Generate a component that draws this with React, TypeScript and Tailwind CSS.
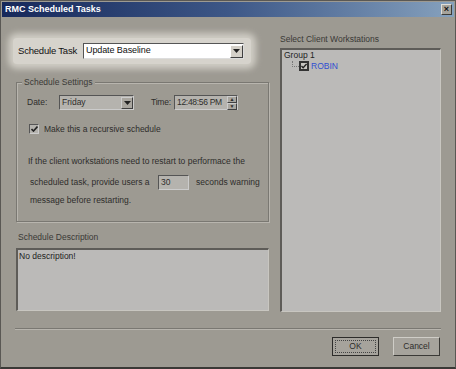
import React from "react";

const font = { fontFamily: '"Liberation Sans", Arial, sans-serif' };

const DownArrow = () => (
  <svg width="7" height="4" viewBox="0 0 7 4">
    <path d="M0 0h7L3.5 4z" fill="#222" />
  </svg>
);

const Check = () => (
  <svg width="7" height="6" viewBox="0 0 7 6">
    <path d="M0.5 3l2 2 4-4.5" stroke="#222" strokeWidth="1.6" fill="none" />
  </svg>
);

const App = () => {
  return (
    <div style={font} className="w-[456px] h-[369px] bg-[#9d9a92] border border-[#5a5854] border-b-2 border-b-[#3a3936] flex flex-col text-[#2e2d2b] overflow-hidden">
      {/* title bar */}
      <div className="mx-[1px] mt-[1px] h-[15px] flex items-center justify-between pl-[3px] pr-[2px] bg-gradient-to-r from-[#17285a] via-[#3d5787] to-[#86a1bd]">
        <span className="text-white font-bold text-[9px] leading-none">RMC Scheduled Tasks</span>
        <div className="w-[11px] h-[11px] bg-[#a6a39b] border border-[#e0ded8] border-r-[#3c3b38] border-b-[#3c3b38] flex items-center justify-center text-[9px] font-bold leading-none text-[#111]">×</div>
      </div>

      <div className="flex flex-1 px-[14px] pt-[21px]">
        {/* left column */}
        <div className="w-[254px] flex flex-col">
          <div className="ml-[-2px] w-[238px] h-[26px] bg-[#d6d3cc] rounded-sm shadow-[0_0_6px_5px_#cfccc4] flex items-center pl-[5px]">
            <span className="w-[60px] text-[9.5px] text-[#111] tracking-[-0.2px]">Schedule Task</span>
            <div className="ml-[5px] w-[161px] h-[16px] bg-white border border-[#555] border-r-[#ddd] border-b-[#ddd] flex items-center justify-between pl-[2px]">
              <span className="text-[9px] text-[#111] tracking-[-0.1px]">Update Baseline</span>
              <div className="w-[13px] h-[13px] bg-[#d4d0c8] border border-[#fff] border-r-[#404040] border-b-[#404040] flex items-center justify-center">
                <DownArrow />
              </div>
            </div>
          </div>

          {/* Schedule settings group */}
          <div className="relative mt-[18px] ml-[1px] h-[140px] border border-[#7a7872] shadow-[inset_1px_1px_0_#b8b5ae,1px_1px_0_#b8b5ae] text-[8.5px] whitespace-nowrap">
            <span className="absolute left-[5px] top-[-7px] bg-[#9d9a92] px-[2px] text-[8.5px] text-[#3a3936]">Schedule Settings</span>
            <div className="flex items-center mt-[12px] ml-[10px]">
              <span className="w-[32px]">Date:</span>
              <div className="w-[75px] h-[15px] bg-[#b5b3ae] border border-[#555] border-r-[#ccc] border-b-[#ccc] flex items-center justify-between pl-[2px]">
                <span>Friday</span>
                <div className="w-[12px] h-[12px] bg-[#a9a69f] border border-[#ccc] border-r-[#404040] border-b-[#404040] flex items-center justify-center">
                  <DownArrow />
                </div>
              </div>
              <span className="ml-[17px] w-[23px] tracking-[-0.2px]">Time:</span>
              <div className="w-[64px] h-[15px] bg-[#b5b3ae] border border-[#555] border-r-[#ccc] border-b-[#ccc] flex items-center justify-between pl-[2px]">
                <span className="tracking-[-0.3px]">12:48:56 PM</span>
                <div className="w-[10px] h-[13px] flex flex-col">
                  <div className="flex-1 bg-[#a9a69f] border border-[#ccc] border-r-[#404040] border-b-[#404040] text-[5px] leading-none flex items-center justify-center">▲</div>
                  <div className="flex-1 bg-[#a9a69f] border border-[#ccc] border-r-[#404040] border-b-[#404040] text-[5px] leading-none flex items-center justify-center">▼</div>
                </div>
              </div>
            </div>

            <div className="flex items-center mt-[13px] ml-[12px]">
              <div className="w-[10px] h-[10px] bg-[#b5b3ae] border border-[#555] border-r-[#ccc] border-b-[#ccc] flex items-center justify-center">
                <Check />
              </div>
              <span className="ml-[5px]">Make this a recursive schedule</span>
            </div>

            <div className="mt-[19px] ml-[11px] leading-[12px]">If the client workstations need to restart to performace the</div>
            <div className="flex items-center mt-[8px] ml-[13px]">
              <span className="w-[128px]">scheduled task, provide users a</span>
              <div className="w-[31px] h-[15px] bg-[#b5b3ae] border border-[#555] border-r-[#ccc] border-b-[#ccc] flex items-center pl-[2px]">30</div>
              <span className="ml-[7px]">seconds warning</span>
            </div>
            <div className="ml-[13px] mt-[4px]">message before restarting.</div>
          </div>

          {/* description */}
          <span className="mt-[9px] ml-[3px] text-[8.5px] text-[#3a3936]">Schedule Description</span>
          <div className="mt-[4px] ml-[1px] w-[253px] h-[63px] bg-[#bbbab8] border border-[#5e5c58] border-l-2 border-t-2 border-r-[#c8c6c0] border-b-[#c8c6c0] px-[1px] text-[8.5px] text-[#222]">
            No description!
          </div>
        </div>

        {/* right column */}
        <div className="ml-[11px] flex flex-col">
          <span className="mt-[-5px] text-[8.5px] text-[#3a3936]">Select Client Workstations</span>
          <div className="mt-[2px] w-[161px] h-[264px] bg-[#bbbab8] border border-[#5e5c58] border-l-2 border-t-2 border-r-[#c8c6c0] border-b-[#c8c6c0] text-[8.5px] leading-[10px] text-[#222] pl-[2px]">
            <div>Group 1</div>
            <div className="flex items-center ml-[8px] mt-[1px]">
              <div className="w-[7px] h-[6px] border-l border-b border-dotted border-[#777] mt-[-4px]" />
              <div className="w-[10px] h-[10px] bg-[#c8c6c2] border-2 border-[#333] flex items-center justify-center">
                <Check />
              </div>
              <span className="ml-[2px] text-[#2f4fd0]">ROBIN</span>
            </div>
          </div>
        </div>
      </div>

      {/* separator */}
      <div className="mx-[14px] h-[2px] border-t border-[#7a7872] border-b border-b-[#b8b5ae]" />

      {/* buttons */}
      <div className="flex justify-end gap-[14px] pr-[15px] pt-[7px] pb-[11px] text-[8.5px]">
        <div className="w-[47px] h-[19px] border border-[#2d2c2a] bg-[#a6a39c] flex items-center justify-center p-[2px]">
          <div className="w-full h-full border border-dotted border-[#444] flex items-center justify-center">OK</div>
        </div>
        <div className="w-[47px] h-[19px] bg-[#a6a39c] border border-[#cfcdc7] border-r-[#3a3936] border-b-[#3a3936] flex items-center justify-center">Cancel</div>
      </div>
    </div>
  );
};

export default App;
